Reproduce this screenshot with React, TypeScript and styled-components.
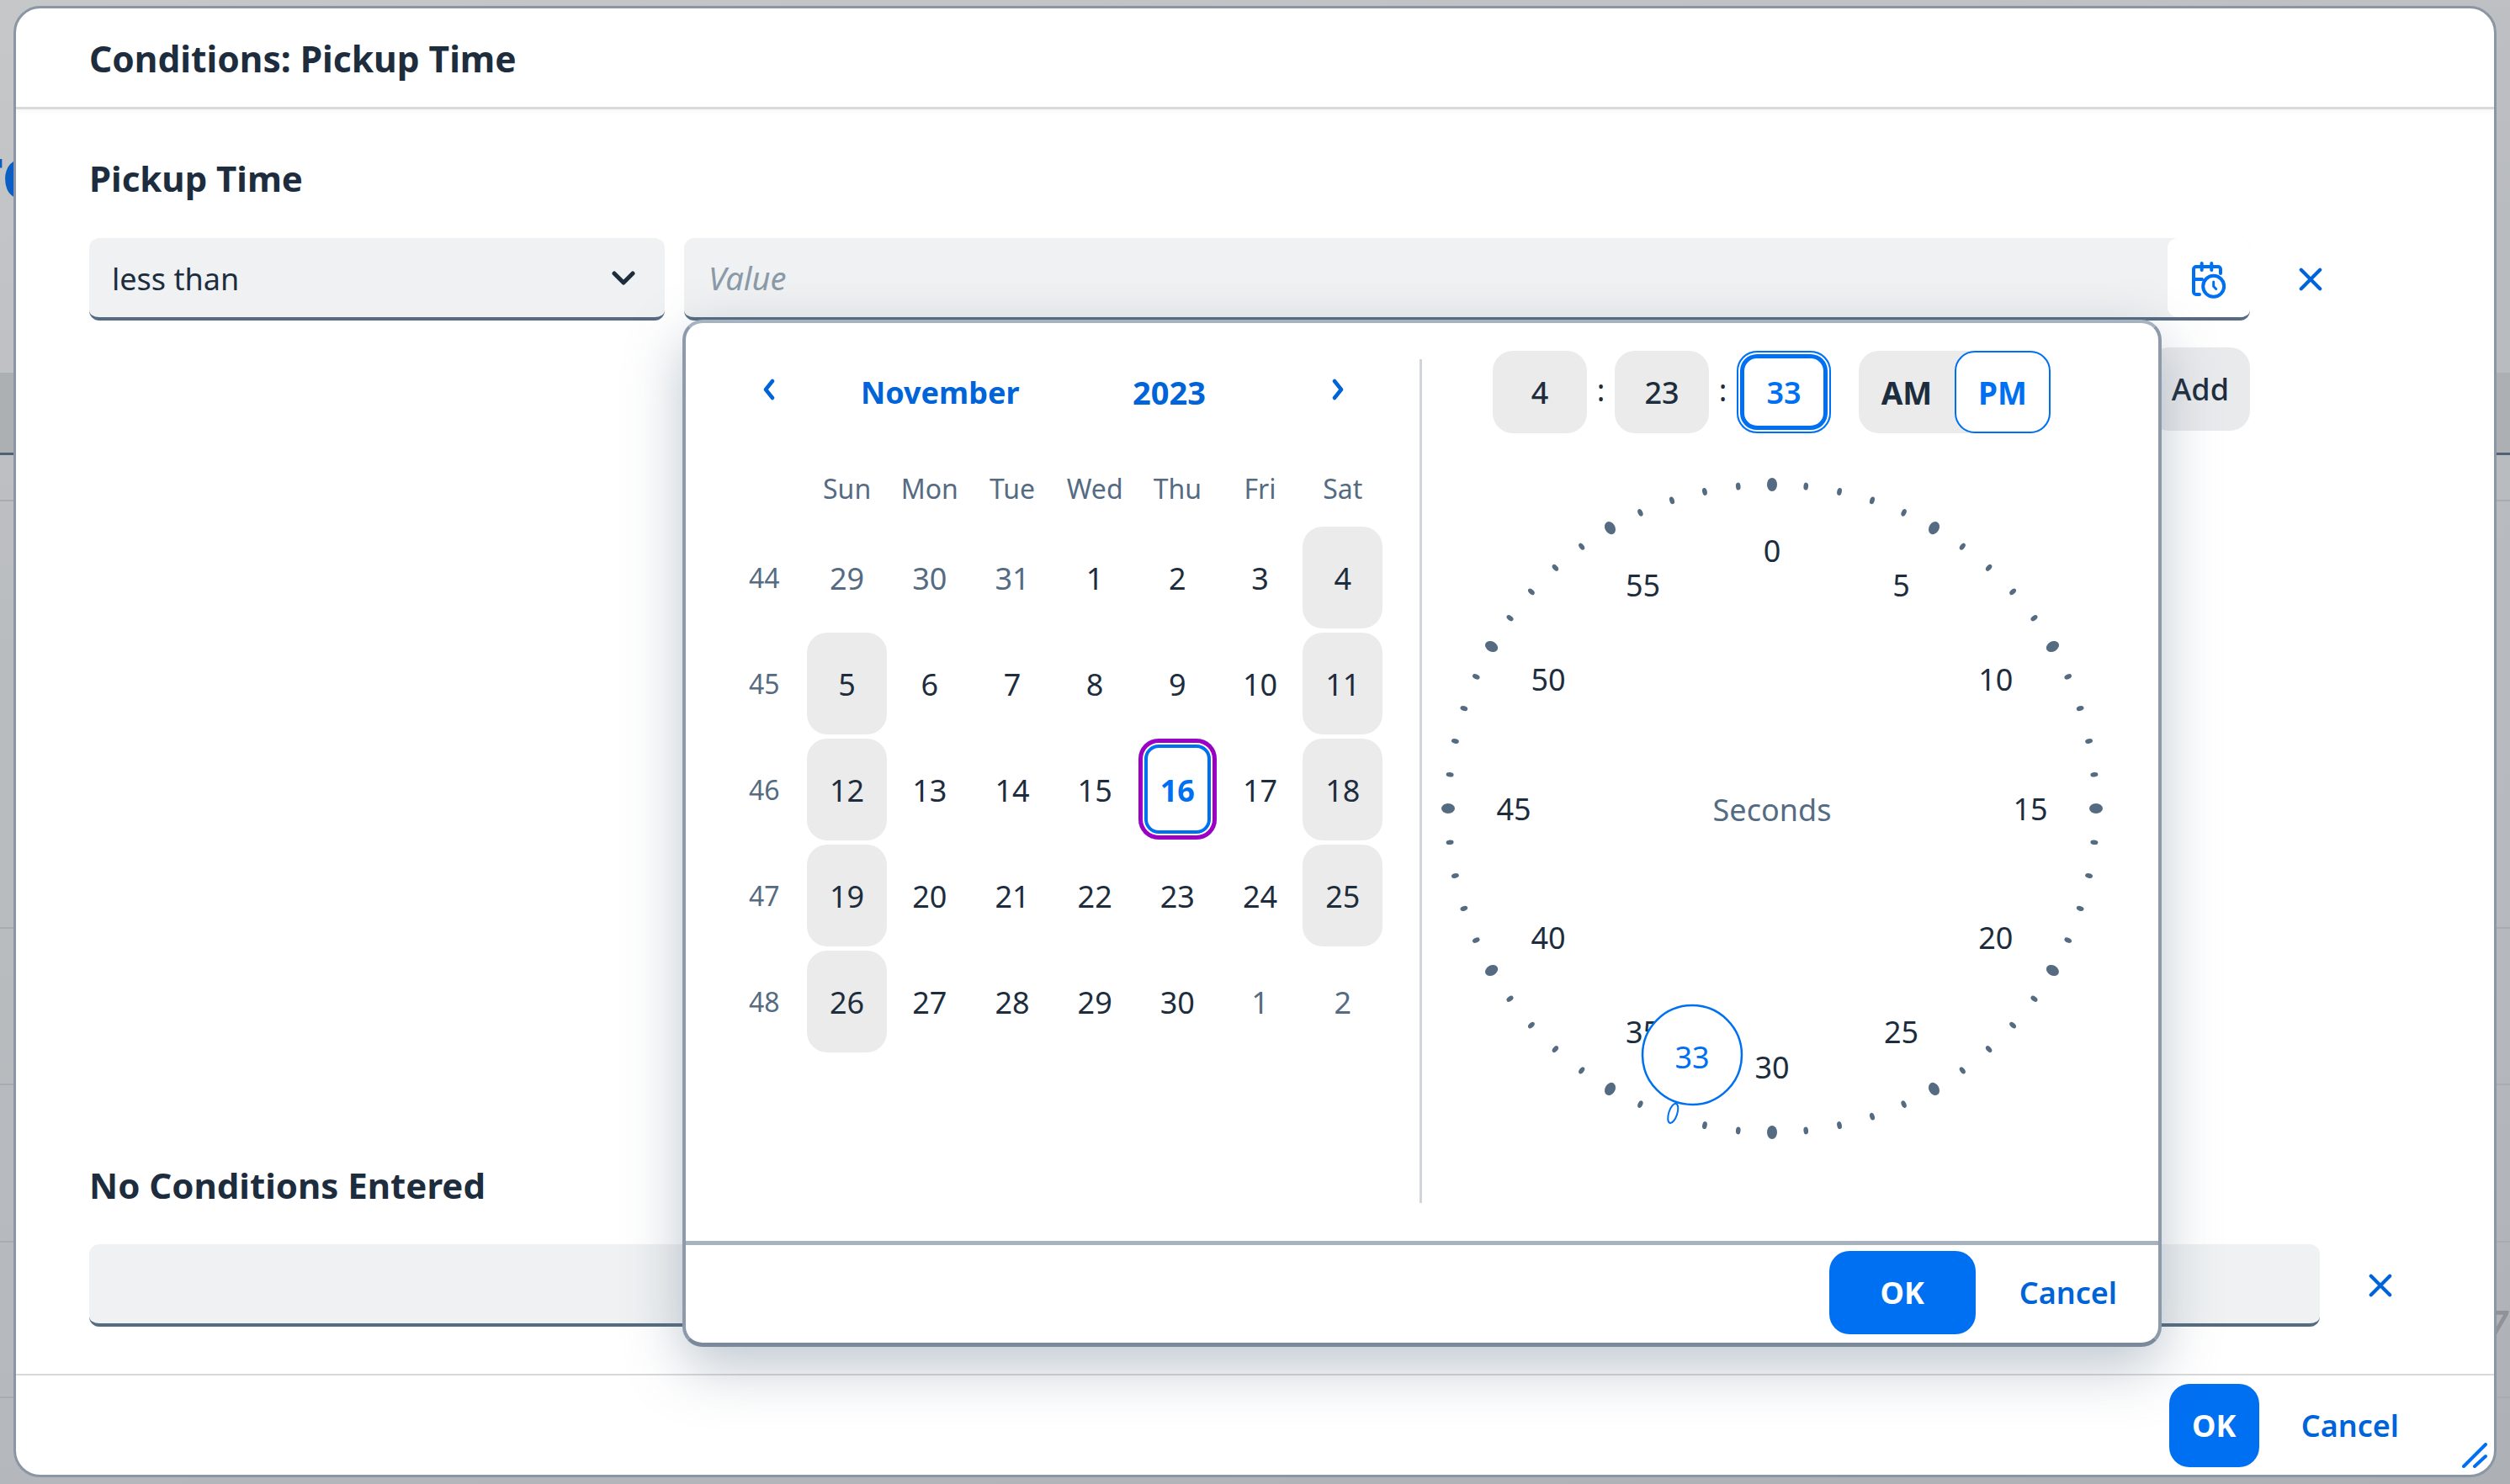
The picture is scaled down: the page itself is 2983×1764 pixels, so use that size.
import styled, { createGlobalStyle } from "styled-components";

const BLUE = "#0070f2";
const LINK = "#0064d9";
const INK = "#1d2d3e";
const MUTED = "#556b82";

const GlobalStyle = createGlobalStyle`
  html, body {
    margin: 0;
    padding: 0;
    height: 100%;
    background: #b9bcc0;
    font-family: "Noto Sans", "Liberation Sans", sans-serif;
    color: ${INK};
    overflow: hidden;
  }
`;

const Page = styled.div`
  position: relative;
  width: 2983px;
  height: 1764px;
  padding: 7px 16px 8px;
  box-sizing: border-box;
  background: linear-gradient(170deg, #c6c7c9 0, #b9bcbf 35%, #b6b9bd 70%, #adb0b4 100%);
`;

const BackBand = styled.div`
  position: absolute;
  left: 0;
  top: 443px;
  width: 100%;
  height: 95px;
  background: #adb0b3;
  border-bottom: 3px solid #4f6175;
`;

const BackLine = styled.div<{ $y: number }>`
  position: absolute;
  left: 0;
  top: ${(p) => p.$y}px;
  width: 100%;
  height: 2px;
  background: #a8abaf;
`;

const GhostTitle = styled.span`
  position: absolute;
  left: -35px;
  top: 166px;
  font-size: 66px;
  font-weight: 900;
  line-height: 88px;
  color: #0b5fc4;
  white-space: nowrap;
`;

const GhostDigit = styled.span`
  position: absolute;
  left: 2948px;
  top: 1538px;
  font-size: 60px;
  line-height: 80px;
  color: #8f9398;
  font-style: italic;
`;

const Dialog = styled.div`
  position: relative;
  height: 100%;
  box-sizing: border-box;
  display: flex;
  flex-direction: column;
  background: #fff;
  border: 3px solid #8a96a3;
  border-radius: 32px;
  overflow: hidden;
`;

const Header = styled.header`
  height: 120px;
  box-sizing: border-box;
  flex: none;
  display: flex;
  align-items: center;
  padding: 2px 0 0 87px;
  border-bottom: 3px solid #d9d9d9;
  box-shadow: 0 2px 6px rgba(85, 107, 130, 0.06);
  font-size: 42.5px;
  font-weight: 700;
`;

const Body = styled.main`
  flex: 1;
  display: flex;
  flex-direction: column;
  padding: 0 87px;
`;

const SectionTitle = styled.h2`
  margin: 0;
  font-size: 42px;
  font-weight: 700;
  line-height: 56px;
`;

const PickupTitle = styled(SectionTitle)`
  margin-top: 54px;
`;

const TopRow = styled.div`
  margin-top: 43px;
  display: flex;
  align-items: flex-start;
`;

const Field = styled.div`
  height: 98px;
  box-sizing: border-box;
  display: flex;
  align-items: center;
  background: #eff1f2;
  border-bottom: 4px solid ${MUTED};
  border-radius: 12px;
  font-size: 36px;
`;

const SelectField = styled(Field)`
  width: 684px;
  padding: 2px 35px 0 27px;
  justify-content: space-between;
`;

const ValueField = styled(Field)`
  width: 1861px;
  margin-left: 23px;
  padding-left: 29px;
  justify-content: space-between;
`;

const Placeholder = styled.span`
  font-size: 38px;
  font-style: italic;
  color: #8b9aa8;
`;

const PickerButton = styled.span`
  width: 98px;
  height: 94px;
  box-sizing: border-box;
  padding-top: 6px;
  display: flex;
  align-items: center;
  justify-content: center;
  background: #fff;
  border-radius: 12px;
`;

const ClearIcon = styled.span`
  margin-left: 58px;
  height: 98px;
  width: 28px;
  display: flex;
  align-items: center;
  color: ${LINK};
`;

const AddRow = styled.div`
  margin-top: 32px;
  display: flex;
  width: 2568px;
  justify-content: flex-end;
`;

const AddButton = styled.span`
  width: 120px;
  height: 99px;
  box-sizing: border-box;
  padding-right: 25px;
  display: flex;
  align-items: center;
  justify-content: flex-end;
  background: #e9eaec;
  border-radius: 24px;
  font-size: 36px;
  font-weight: 500;
`;

const EmptyBlock = styled.div`
  margin-top: auto;
  padding-bottom: 56px;
`;

const ConditionRow = styled.div`
  margin-top: 42px;
  display: flex;
  align-items: center;
`;

const ConditionField = styled(Field)`
  width: 2651px;
`;

const Footer = styled.footer<{ $popover?: boolean }>`
  flex: none;
  display: flex;
  align-items: center;
  justify-content: flex-end;
  border-top: ${(p) => (p.$popover ? "5px solid #a7b2bf" : "2px solid #d9d9d9")};
  height: ${(p) => (p.$popover ? 121 : 120)}px;
  box-sizing: border-box;
  gap: ${(p) => (p.$popover ? 52 : 50)}px;
  padding-right: ${(p) => (p.$popover ? 49 : 113)}px;
  padding-bottom: ${(p) => (p.$popover ? 3 : 0)}px;
`;

const PrimaryButton = styled.span<{ $width: number }>`
  width: ${(p) => p.$width}px;
  height: 99px;
  display: flex;
  align-items: center;
  justify-content: center;
  background: ${BLUE};
  border-radius: 24px;
  color: #fff;
  font-size: 36px;
  font-weight: 700;
`;

const TextButton = styled.span`
  color: ${LINK};
  font-size: 36px;
  font-weight: 600;
`;

const ResizeHandle = styled.svg`
  position: absolute;
  right: 8px;
  bottom: 8px;
`;

const Popover = styled.div`
  position: absolute;
  left: 792px;
  top: 370px;
  width: 1758px;
  height: 1221px;
  box-sizing: border-box;
  display: flex;
  flex-direction: column;
  background: #fff;
  border: 4px solid #8c9aac;
  border-top-color: #a7b2bf;
  border-bottom-width: 5px;
  border-bottom-color: #7b8a9b;
  border-radius: 24px;
  box-shadow: 0 24px 68px rgba(85, 107, 130, 0.38);
  overflow: hidden;
`;

const PopoverBody = styled.div`
  flex: 1;
  display: flex;
  min-height: 0;
`;

const CalendarPane = styled.section`
  width: 875px;
  height: 1003px;
  flex: none;
  box-sizing: border-box;
  margin-top: 43px;
  padding-top: 13px;
  border-right: 3px solid #d1d5da;
`;

const MonthBar = styled.div`
  height: 40px;
  display: grid;
  grid-template-columns: 208px 186px 137px 85px 1fr;
  align-items: center;
  color: ${LINK};
  font-size: 38px;
  font-weight: 700;
`;

const MonthLabel = styled.span`
  font-size: 36px;
  white-space: nowrap;
`;

const MonthChevron = styled.span<{ $pad: number }>`
  display: flex;
  padding-left: ${(p) => p.$pad}px;
  padding-bottom: 6px;
`;

const WeekdayRow = styled.div`
  margin-top: 79px;
  margin-left: 142.5px;
  display: grid;
  grid-template-columns: repeat(7, 98.2px);
  justify-items: center;
  color: ${MUTED};
  font-size: 32px;
  line-height: 44px;
`;

const DayGrid = styled.div`
  margin-top: 20px;
  margin-left: 44px;
  display: grid;
  grid-template-columns: 98.5px repeat(7, 98.2px);
  grid-auto-rows: 126px;
  align-items: center;
  justify-items: center;
`;

const WeekNumber = styled.span`
  color: ${MUTED};
  font-size: 32px;
`;

const Day = styled.span<{ $weekend?: boolean; $other?: boolean }>`
  width: 95px;
  height: 121px;
  box-sizing: border-box;
  padding-top: 3px;
  display: flex;
  align-items: center;
  justify-content: center;
  font-size: 36px;
  border-radius: 24px;
  background: ${(p) => (p.$weekend ? "#ebebeb" : "transparent")};
  color: ${(p) => (p.$other ? MUTED : INK)};
`;

const Today = styled(Day)`
  width: 93px;
  height: 120px;
  color: ${BLUE};
  font-weight: 700;
  box-shadow:
    inset 0 0 0 5px #9b00c4,
    inset 0 0 0 7px #fff,
    inset 0 0 0 11px ${BLUE};
`;

const TimePane = styled.section`
  flex: 1;
  position: relative;
`;

const TimeInputs = styled.div`
  position: absolute;
  left: 84px;
  top: 33px;
  display: flex;
  align-items: center;
`;

const TimeBox = styled.span<{ $active?: boolean }>`
  width: 112px;
  height: 98px;
  display: flex;
  align-items: center;
  justify-content: center;
  border-radius: 24px;
  font-size: 36px;
  font-weight: ${(p) => (p.$active ? 600 : 500)};
  background: ${(p) => (p.$active ? "#fff" : "#ebebeb")};
  color: ${(p) => (p.$active ? BLUE : INK)};
  box-shadow: ${(p) =>
    p.$active ? `inset 0 0 0 2px ${BLUE}, inset 0 0 0 4px #fff, inset 0 0 0 9px ${BLUE}` : "none"};
`;

const Colon = styled.span`
  width: 33px;
  text-align: center;
  font-size: 36px;
  padding-bottom: 6px;
`;

const Meridiem = styled.div`
  margin-left: 33px;
  display: flex;
  background: #ebebeb;
  border-radius: 24px;
  height: 98px;
`;

const MeridiemOption = styled.span<{ $active?: boolean }>`
  width: 114px;
  box-sizing: border-box;
  display: flex;
  align-items: center;
  justify-content: center;
  font-size: 37px;
  font-weight: 700;
  border-radius: 24px;
  ${(p) => p.$active && `background: #fff; color: ${BLUE}; border: 2px solid ${BLUE};`}
`;

const ClockFace = styled.svg`
  position: absolute;
  left: 0;
  top: 0;
  overflow: visible;
`;

const ClockText = styled.text<{ $blue?: boolean; $muted?: boolean }>`
  font-family: "Noto Sans", "Liberation Sans", sans-serif;
  font-size: 36px;
  text-anchor: middle;
  dominant-baseline: central;
  fill: ${(p) => (p.$blue ? BLUE : p.$muted ? MUTED : INK)};
`;

const weeks: { no: number; days: number[] }[] = [
  { no: 44, days: [29, 30, 31, 1, 2, 3, 4] },
  { no: 45, days: [5, 6, 7, 8, 9, 10, 11] },
  { no: 46, days: [12, 13, 14, 15, 16, 17, 18] },
  { no: 47, days: [19, 20, 21, 22, 23, 24, 25] },
  { no: 48, days: [26, 27, 28, 29, 30, 1, 2] },
];

const CloseIcon = () => (
  <svg width="30" height="30" viewBox="0 0 30 30" fill="none" stroke="currentColor" strokeWidth="4.5" strokeLinecap="round">
    <path d="M3 3l24 24M27 3L3 27" />
  </svg>
);

const NavChevron = ({ dir }: { dir: "left" | "right" }) => (
  <svg width="16" height="26" viewBox="0 0 16 26" fill="none" stroke={LINK} strokeWidth="4.5" strokeLinecap="round" strokeLinejoin="round">
    <path d={dir === "left" ? "M12 3L4 13l8 10" : "M4 3l8 10L4 23"} />
  </svg>
);

const SelectChevron = () => (
  <svg width="28" height="18" viewBox="0 0 28 18" fill="none" stroke={INK} strokeWidth="5" strokeLinecap="round" strokeLinejoin="round">
    <path d="M3 3l11 11L25 3" />
  </svg>
);

const CalendarClockIcon = () => (
  <svg width="40" height="44" viewBox="0 0 40 44" fill="none" stroke={BLUE} strokeWidth="4" strokeLinecap="round">
    <path d="M9 39H5a3 3 0 0 1-3-3V9a3 3 0 0 1 3-3h26a3 3 0 0 1 3 3v5" />
    <path d="M11.7 2v8M23.3 2v8M3 21h9" />
    <circle cx="25.7" cy="29.3" r="12.5" />
    <path d="M25.7 24v5.5l3 3" strokeWidth="3" />
  </svg>
);

const CENTER_X = 416;
const CENTER_Y = 577;

function ClockDial() {
  const ticks = Array.from({ length: 60 }, (_, i) => i);
  return (
    <ClockFace width="870" height="1100">
      {ticks.map((i) => {
        const major = i % 5 === 0;
        if (i === 33) return null;
        return (
          <ellipse
            key={i}
            cx={CENTER_X}
            cy={CENTER_Y - 385}
            rx={major ? 6 : 2.8}
            ry={major ? 8 : 4.5}
            fill={MUTED}
            transform={`rotate(${i * 6} ${CENTER_X} ${CENTER_Y})`}
          />
        );
      })}
      <ellipse
        cx={CENTER_X}
        cy={CENTER_Y - 381}
        rx="5"
        ry="12"
        fill="#fff"
        stroke={BLUE}
        strokeWidth="2"
        transform={`rotate(198 ${CENTER_X} ${CENTER_Y})`}
      />
      {ticks
        .filter((i) => i % 5 === 0)
        .map((i) => {
          const a = (i * 6 * Math.PI) / 180;
          return (
            <ClockText key={i} x={CENTER_X + Math.sin(a) * 307} y={CENTER_Y - Math.cos(a) * 307}>
              {i}
            </ClockText>
          );
        })}
      <ClockText $muted x={CENTER_X} y={CENTER_Y + 1}>
        Seconds
      </ClockText>
      <circle cx={CENTER_X - 95} cy={CENTER_Y + 293} r="59" fill="#fff" stroke={BLUE} strokeWidth="2.5" />
      <ClockText $blue x={CENTER_X - 95} y={CENTER_Y + 295}>
        33
      </ClockText>
    </ClockFace>
  );
}

function Week({ no, days, row }: { no: number; days: number[]; row: number }) {
  return (
    <>
      <WeekNumber>{no}</WeekNumber>
      {days.map((d, c) => {
        const other = (row === 0 && c < 3) || (row === 4 && c > 4);
        const weekend = (c === 0 || c === 6) && !other;
        if (row === 2 && c === 4) return <Today key={c}>{d}</Today>;
        return (
          <Day key={c} $weekend={weekend} $other={other}>
            {d}
          </Day>
        );
      })}
    </>
  );
}

export default function App() {
  return (
    <>
      <GlobalStyle />
      <Page>
        <BackBand />
        {[594, 1102, 1288, 1475, 1660].map((y) => (
          <BackLine key={y} $y={y} />
        ))}
        <GhostTitle>TC</GhostTitle>
        <GhostDigit>7</GhostDigit>
        <Dialog>
          <Header>Conditions: Pickup Time</Header>
          <Body>
            <PickupTitle>Pickup Time</PickupTitle>
            <TopRow>
              <SelectField>
                less than
                <SelectChevron />
              </SelectField>
              <ValueField>
                <Placeholder>Value</Placeholder>
                <PickerButton>
                  <CalendarClockIcon />
                </PickerButton>
              </ValueField>
              <ClearIcon>
                <CloseIcon />
              </ClearIcon>
            </TopRow>
            <AddRow>
              <AddButton>Add</AddButton>
            </AddRow>
            <EmptyBlock>
              <SectionTitle>No Conditions Entered</SectionTitle>
              <ConditionRow>
                <ConditionField />
                <ClearIcon>
                  <CloseIcon />
                </ClearIcon>
              </ConditionRow>
            </EmptyBlock>
          </Body>
          <Footer>
            <PrimaryButton $width={107}>OK</PrimaryButton>
            <TextButton>Cancel</TextButton>
          </Footer>
          <ResizeHandle width="30" height="30" viewBox="0 0 30 30" stroke={BLUE} strokeWidth="4" strokeLinecap="round">
            <path d="M2 28L28 2M15 28L28 16" />
          </ResizeHandle>
          <Popover>
            <PopoverBody>
              <CalendarPane>
                <MonthBar>
                  <MonthChevron $pad={91}>
                    <NavChevron dir="left" />
                  </MonthChevron>
                  <MonthLabel>November</MonthLabel>
                  <span />
                  <span>2023</span>
                  <MonthChevron $pad={151}>
                    <NavChevron dir="right" />
                  </MonthChevron>
                </MonthBar>
                <WeekdayRow>
                  {["Sun", "Mon", "Tue", "Wed", "Thu", "Fri", "Sat"].map((d) => (
                    <span key={d}>{d}</span>
                  ))}
                </WeekdayRow>
                <DayGrid>
                  {weeks.map((w, r) => (
                    <Week key={w.no} no={w.no} days={w.days} row={r} />
                  ))}
                </DayGrid>
              </CalendarPane>
              <TimePane>
                <TimeInputs>
                  <TimeBox>4</TimeBox>
                  <Colon>:</Colon>
                  <TimeBox>23</TimeBox>
                  <Colon>:</Colon>
                  <TimeBox $active>33</TimeBox>
                  <Meridiem>
                    <MeridiemOption>AM</MeridiemOption>
                    <MeridiemOption $active>PM</MeridiemOption>
                  </Meridiem>
                </TimeInputs>
                <ClockDial />
              </TimePane>
            </PopoverBody>
            <Footer $popover>
              <PrimaryButton $width={174}>OK</PrimaryButton>
              <TextButton>Cancel</TextButton>
            </Footer>
          </Popover>
        </Dialog>
      </Page>
    </>
  );
}
